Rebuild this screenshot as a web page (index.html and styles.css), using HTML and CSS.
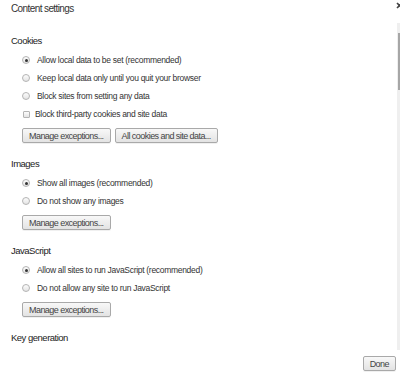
FILE: index.html
```html
<!DOCTYPE html>
<html>
<head>
  <meta charset="UTF-8">
  <title>Content settings</title>
  <link rel="stylesheet" href="styles.css">
</head>
<body>
  <div class="dialog">
    <div class="dialog-header">
      <h1>Content settings</h1>
      <svg class="close-btn" width="7" height="7" viewBox="0 0 7 7">
        <path d="M1 1 L6 6 M6 1 L1 6" stroke="#444" stroke-width="1.6"/>
      </svg>
    </div>

    <div class="dialog-body">
      <div class="settings">
        <section class="settings-section">
          <h3>Cookies</h3>
          <div class="option-list">
            <label class="option"><span class="radio checked"></span>Allow local data to be set (recommended)</label>
            <label class="option"><span class="radio"></span>Keep local data only until you quit your browser</label>
            <label class="option"><span class="radio"></span>Block sites from setting any data</label>
            <label class="option"><span class="checkbox"></span>Block third-party cookies and site data</label>
          </div>
          <div class="button-row">
            <button class="btn">Manage exceptions...</button>
            <button class="btn">All cookies and site data...</button>
          </div>
        </section>

        <section class="settings-section">
          <h3>Images</h3>
          <div class="option-list">
            <label class="option"><span class="radio checked"></span>Show all images (recommended)</label>
            <label class="option"><span class="radio"></span>Do not show any images</label>
          </div>
          <div class="button-row">
            <button class="btn">Manage exceptions...</button>
          </div>
        </section>

        <section class="settings-section">
          <h3>JavaScript</h3>
          <div class="option-list">
            <label class="option"><span class="radio checked"></span>Allow all sites to run JavaScript (recommended)</label>
            <label class="option"><span class="radio"></span>Do not allow any site to run JavaScript</label>
          </div>
          <div class="button-row">
            <button class="btn">Manage exceptions...</button>
          </div>
        </section>

        <section class="settings-section">
          <h3>Key generation</h3>
        </section>
      </div>

      <div class="scrollbar">
        <div class="scrollbar-thumb"></div>
      </div>
    </div>

    <div class="dialog-footer">
      <button class="btn">Done</button>
    </div>
  </div>
</body>
</html>
```

FILE: styles.css
```css
:root {
  --text-color: #333;
  --heading-color: #222;
  --border-color: #a9a9a9;
  --track-color: #efefef;
  --thumb-color: #a6a6a6;
}

* {
  margin: 0;
  padding: 0;
  box-sizing: border-box;
}

body {
  font-family: "Liberation Sans", Arial, sans-serif;
  font-size: 9px;
  letter-spacing: -0.55px;
  color: var(--text-color);
  background-color: white;
  width: 400px;
  height: 376px;
  overflow: hidden;
}

.dialog {
  display: flex;
  flex-direction: column;
  height: 376px;
}

.dialog-header {
  display: flex;
  justify-content: space-between;
  align-items: flex-start;
  height: 20px;
  padding-left: 11px;
}

.dialog-header h1 {
  font-size: 10px;
  font-weight: normal;
  letter-spacing: -0.6px;
  line-height: 18px;
  color: var(--text-color);
}

.close-btn {
  margin-top: 2px;
  margin-right: -3px;
}

.dialog-body {
  display: flex;
  height: 330px;
}

.settings {
  flex: 1;
  padding-left: 11px;
  overflow: hidden;
}

.settings-section h3 {
  font-size: 9.5px;
  font-weight: normal;
  letter-spacing: -0.5px;
  line-height: 16px;
  margin-top: 13px;
  color: var(--heading-color);
}

.option-list {
  margin-top: 2px;
  margin-left: 11px;
}

.option {
  display: flex;
  align-items: center;
  height: 18px;
  font-size: 8.5px;
  letter-spacing: -0.3px;
}

.radio {
  width: 8px;
  height: 8px;
  border: 1px solid #b4b4b4;
  border-radius: 50%;
  background: linear-gradient(#fcfcfc, #e4e4e4);
  margin-right: 7px;
  position: relative;
}

.radio.checked::after {
  content: "";
  position: absolute;
  top: 1.5px;
  left: 1.5px;
  width: 3px;
  height: 3px;
  border-radius: 50%;
  background-color: #333;
}

.checkbox {
  width: 7px;
  height: 7px;
  border: 1px solid #b4b4b4;
  border-radius: 1px;
  background: linear-gradient(#fcfcfc, #e4e4e4);
  margin-left: 1px;
  margin-right: 5px;
}

.button-row {
  display: flex;
  gap: 4px;
  margin-top: 5px;
  margin-left: 11px;
}

.btn {
  font-family: inherit;
  font-size: 9px;
  letter-spacing: -0.55px;
  color: #444;
  height: 15px;
  padding: 0 6px;
  border: 1px solid var(--border-color);
  border-radius: 2px;
  background: linear-gradient(#f8f8f8, #e3e3e3);
  box-shadow: 0 1px 0 rgba(0, 0, 0, 0.06);
}

.scrollbar {
  width: 3px;
  margin-top: 3px;
  height: 327px;
  background-color: var(--track-color);
}

.scrollbar-thumb {
  width: 2px;
  height: 57px;
  margin-top: 10px;
  margin-left: 1px;
  background-color: var(--thumb-color);
}

.dialog-footer {
  display: flex;
  justify-content: flex-end;
  padding-top: 6px;
  padding-right: 4px;
}
```
